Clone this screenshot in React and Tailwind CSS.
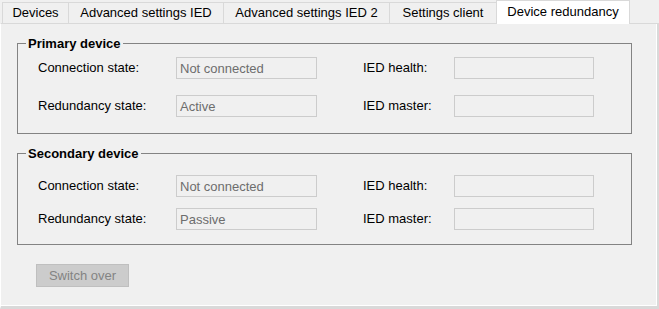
import React from 'react';

const tabs = [
  { label: 'Devices', w: 'w-[67px]' },
  { label: 'Advanced settings IED', w: 'w-[156px]' },
  { label: 'Advanced settings IED 2', w: 'w-[167px]' },
  { label: 'Settings client', w: 'w-[108px]' },
  { label: 'Device redundancy', w: 'w-[134px]', active: true },
];

const Field = ({ value }) => (
  <div className="h-[22px] w-[141px] border border-[#cccccc] bg-[#f0f0f0] pl-[3px] flex items-center text-[#6d6d6d] leading-none">
    {value}
  </div>
);

const Row = ({ label, value, label2 }) => (
  <div className="flex items-center ml-[12px]">
    <div className="w-[138px] -mt-px">{label}</div>
    <Field value={value} />
    <div className="w-[46px]" />
    <div className="w-[91px] -mt-px">{label2}</div>
    <div className="h-[22px] w-[140px] border border-[#cccccc] bg-[#f0f0f0]" />
  </div>
);

const Group = ({ title, top, gap, bottom, rows }) => (
  <fieldset className={`ml-[16px] mt-[12px] w-[615px] border border-[#838383] pl-[8px] ${top} ${bottom}`}>
    <legend className="px-[2px] text-[13px] leading-[15px] font-bold text-black">{title}</legend>
    <div className={`flex flex-col ${gap}`}>
      {rows.map((r) => (
        <Row key={r.label} {...r} />
      ))}
    </div>
  </fieldset>
);

export default function App() {
  return (
    <div
      className="w-[659px] h-[309px] bg-[#f0f0f0] flex flex-col text-[13px] text-black"
      style={{ fontFamily: '"Liberation Sans", Arial, sans-serif' }}
    >
      <div className="h-[23px] flex items-end pl-[2px] shrink-0">
        {tabs.map((t, i) =>
          t.active ? (
            <div
              key={t.label}
              className={`${t.w} h-[24px] -mb-px -ml-px relative z-10 bg-white border border-b-0 border-[#d9d9d9] flex items-center justify-center pb-[2px]`}
            >
              {t.label}
            </div>
          ) : (
            <div
              key={t.label}
              className={`${t.w} h-[21px] ${i > 0 ? '-ml-px' : ''} bg-[#f0f0f0] border border-b-0 border-[#d9d9d9] flex items-center justify-center`}
            >
              {t.label}
            </div>
          )
        )}
      </div>
      <div className="flex-1 border-t border-t-[#d9d9d9] border-l border-l-white border-r-2 border-r-[#d9d9d9] border-b-[3px] border-b-[#d9d9d9]">
        <div className="h-full border-r border-b border-white flex flex-col">
          <Group
            title="Primary device"
            top="pt-[6px]"
            gap="gap-[16px]"
            bottom="pb-[16px]"
            rows={[
              { label: 'Connection state:', value: 'Not connected', label2: 'IED health:' },
              { label: 'Redundancy state:', value: 'Active', label2: 'IED master:' },
            ]}
          />
          <Group
            title="Secondary device"
            top="pt-[14px]"
            gap="gap-[11px]"
            bottom="pb-[14px]"
            rows={[
              { label: 'Connection state:', value: 'Not connected', label2: 'IED health:' },
              { label: 'Redundancy state:', value: 'Passive', label2: 'IED master:' },
            ]}
          />
          <button
            type="button"
            disabled
            className="ml-[35px] mt-[19px] w-[93px] h-[23px] bg-[#cccccc] border border-[#bfbfbf] text-[#838383] flex items-center justify-center leading-none"
          >
            Switch over
          </button>
        </div>
      </div>
    </div>
  );
}
